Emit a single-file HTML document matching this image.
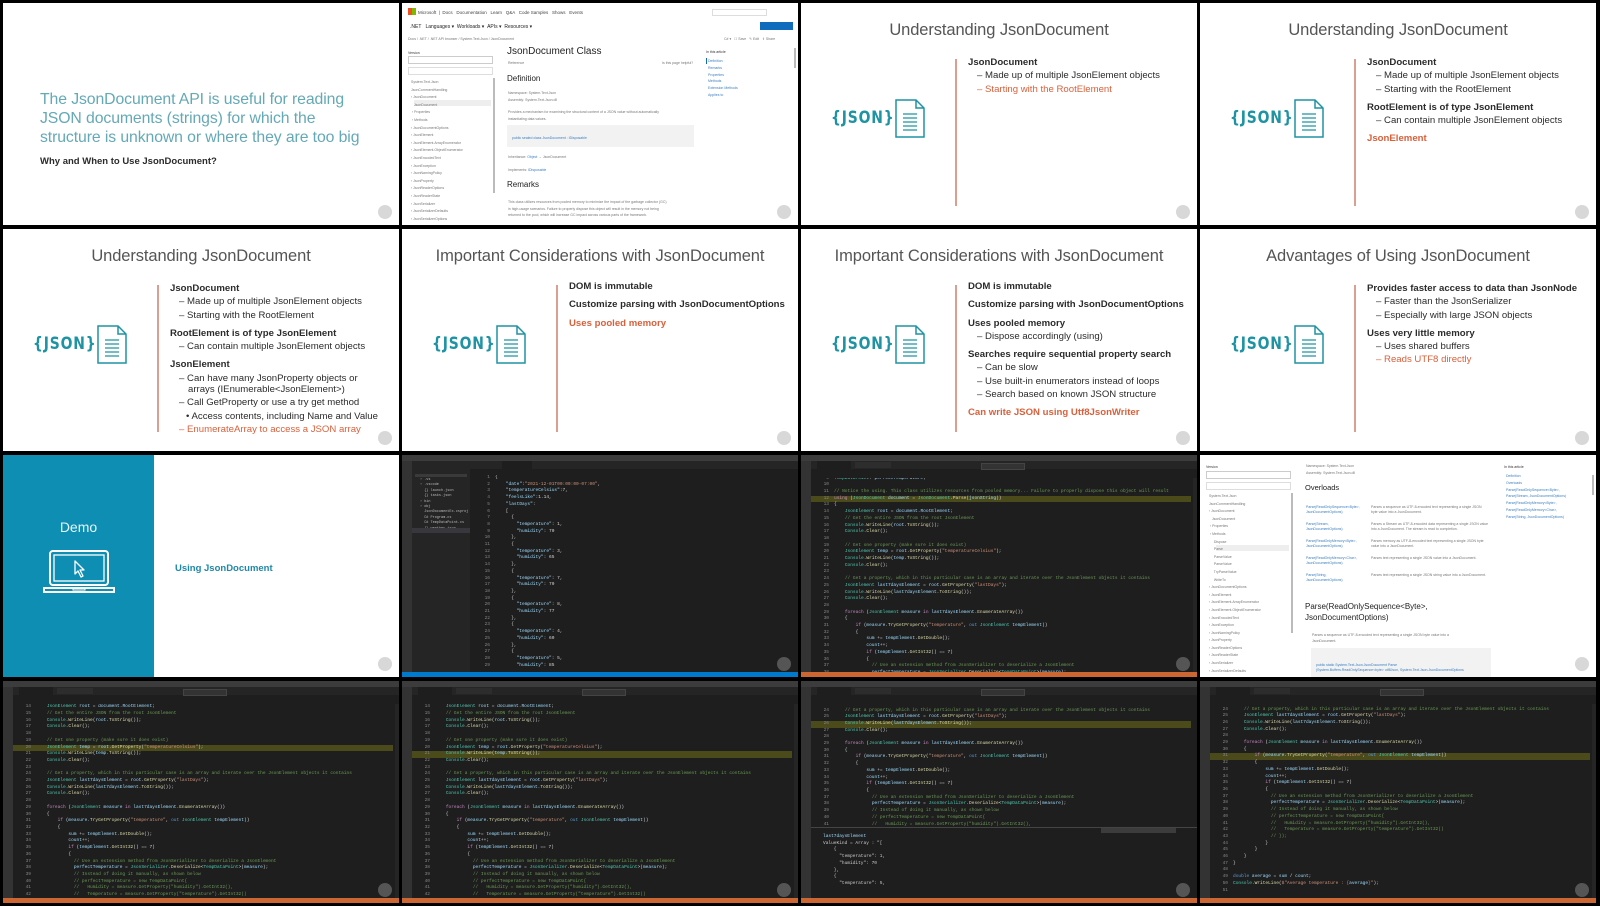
<!DOCTYPE html>
<html style="overflow:hidden"><head><meta charset="utf-8">
<style>
*{margin:0;padding:0;box-sizing:border-box}
body{width:1600px;height:906px;background:#000;position:relative;overflow:hidden;font-family:"Liberation Sans",sans-serif}
.t{position:absolute;width:396px;height:222px;overflow:hidden;background:#fff}
.logo{position:absolute;right:7px;bottom:6px;width:14px;height:14px;border-radius:50%;background:#d8d8d8}
.ttl{position:absolute;top:18px;left:0;width:100%;text-align:center;font-size:16.5px;color:#555;letter-spacing:-.1px}
.div{position:absolute;left:154px;top:56px;width:1.5px;height:147px;background:#d9a090}
.json{position:absolute;left:30px;top:105px;font-family:"DejaVu Sans",sans-serif;font-size:17px;color:#1e93a3;letter-spacing:1px;font-weight:bold;transform:scaleX(.82);transform-origin:left}
.doc{position:absolute;left:94px;top:96px;width:30px;height:39px}
.bl{position:absolute;left:167px;top:53px;font-size:9.6px;color:#2b2b2b;line-height:13.3px}
.bl .h{font-weight:bold}
.bl .s{padding-left:9px}
.bl .s:before{content:"– ";}
.bl .ss{padding-left:16px}
.bl .g{margin-top:5px}
.bl .o{color:#d9603b}
.vs{background:#1e1e1e;font-family:"Liberation Mono",monospace}
.vs .tb{position:absolute;top:0;left:0;right:0;height:6px;background:#3c3c3c}
.vs .ab{position:absolute;top:6px;left:0;width:10px;bottom:5px;background:#333}
.vs .tabs{position:absolute;top:6px;left:10px;right:0;height:8px;background:#252526}
.vs .tab{position:absolute;top:0;height:8px;background:#1e1e1e;width:34px;left:6px}
.vs .tab2{position:absolute;top:1px;height:6px;left:44px;width:36px;background:#2d2d2d}
.vs .dbg{position:absolute;top:8px;left:180px;width:44px;height:7px;background:#333;border:1px solid #444}
.vs .sb{position:absolute;bottom:0;left:0;right:0;height:5px;background:#cc6633}
.vs .ca{position:absolute;top:23px;left:10px;right:4px;bottom:5px;overflow:hidden}
.vs pre{position:absolute;left:0;font-size:4.5px;line-height:6.7px;color:#d4d4d4;font-family:"Liberation Mono",monospace;white-space:pre}
.vs .ln{display:inline-block;width:18px;text-align:right;color:#858585;margin-right:5px}
.vs .hl{background:#4a4a1a}
.c{color:#6a9955}.k{color:#569cd6}.p{color:#c586c0}.y{color:#4ec9b0}.v{color:#9cdcfe}.f{color:#dcdcaa}.s2{color:#ce9178}
.vs .scr{position:absolute;right:0;top:23px;width:4px;bottom:5px;background:#252526}
.dx{font-family:"Liberation Sans",sans-serif;color:#333}
.gt{position:absolute;font-size:3.5px;color:#777;white-space:nowrap}
.lk{color:#3a7fc1}
</style></head><body>

<div class="t" style="left:3px;top:3px">
 <div style="position:absolute;left:37px;top:87px;font-size:15.8px;line-height:19px;color:#64a9b6;letter-spacing:-.1px">The JsonDocument API is useful for reading<br>JSON documents (strings) for which the<br>structure is unknown or where they are too big</div>
 <div style="position:absolute;left:37px;top:153px;font-size:9.5px;font-weight:bold;color:#2b2b2b">Why and When to Use JsonDocument?</div>
 <div class="logo"></div>
</div>

<div class="t dx" style="left:402px;top:3px">
 <div style="position:absolute;left:6px;top:5px;width:8px;height:7px;background:linear-gradient(90deg,#f25022 50%,#7fba00 50%)"></div>
 <div class="gt" style="left:16px;top:7px;font-size:4.5px;color:#444">Microsoft &nbsp;| &nbsp;Docs &nbsp; Documentation &nbsp; Learn &nbsp; Q&amp;A &nbsp; Code Samples &nbsp; Shows &nbsp; Events</div>
 <div style="position:absolute;left:310px;top:6px;width:55px;height:7px;border:1px solid #ddd"></div>
 <div class="gt" style="left:8px;top:21px;font-size:5px;color:#222">.NET &nbsp; Languages ▾ &nbsp;Workloads ▾ &nbsp;APIs ▾ &nbsp;Resources ▾</div>
 <div style="position:absolute;left:358px;top:19px;width:33px;height:8px;background:#0f6cbd"></div>
 <div class="gt" style="left:6px;top:34px">Docs / .NET / .NET API browser / System.Text.Json / JsonDocument</div>
 <div class="gt" style="left:322px;top:34px">C# ▾ &nbsp; ☐ Save &nbsp; ✎ Edit &nbsp; ⇪ Share</div>
 <div class="gt" style="left:6px;top:48px;color:#333">Version</div>
 <div style="position:absolute;left:6px;top:53px;width:85px;height:8px;border:1px solid #ccc"></div>
 <div style="position:absolute;left:6px;top:64px;width:85px;height:8px;border:1px solid #ddd"></div>
 <div style="position:absolute;left:12px;top:97px;width:77px;height:6px;background:#eee"></div>
 <div class="gt" style="left:9px;top:76px;line-height:7.6px;white-space:pre">System.Text.Json
JsonCommentHandling
› JsonDocument
   JsonDocument
 › Properties
 › Methods
› JsonDocumentOptions
› JsonElement
› JsonElement.ArrayEnumerator
› JsonElement.ObjectEnumerator
› JsonEncodedText
› JsonException
› JsonNamingPolicy
› JsonProperty
› JsonReaderOptions
› JsonReaderState
› JsonSerializer
› JsonSerializerDefaults
› JsonSerializerOptions</div>
 <div style="position:absolute;left:91px;top:75px;width:2px;height:115px;background:#bbb"></div>
 <div style="position:absolute;left:105px;top:43px;font-size:10px;color:#222">JsonDocument Class</div>
 <div class="gt" style="left:106px;top:58px">Reference</div>
 <div class="gt" style="left:260px;top:58px">Is this page helpful?</div>
 <div style="position:absolute;left:105px;top:71px;font-size:8px;color:#222">Definition</div>
 <div class="gt" style="left:106px;top:87px;line-height:7px">Namespace: System.Text.Json<br>Assembly: System.Text.Json.dll</div>
 <div class="gt" style="left:106px;top:106px;line-height:7px">Provides a mechanism for examining the structural content of a JSON value without automatically<br>instantiating data values.</div>
 <div style="position:absolute;left:105px;top:122px;width:187px;height:22px;background:#f2f2f2"></div>
 <div class="gt" style="left:110px;top:133px;color:#3a7fc1">public sealed class JsonDocument : IDisposable</div>
 <div class="gt" style="left:106px;top:152px">Inheritance: <span class="lk">Object</span> → JsonDocument</div>
 <div class="gt" style="left:106px;top:165px">Implements: <span class="lk">IDisposable</span></div>
 <div style="position:absolute;left:105px;top:177px;font-size:8px;color:#222">Remarks</div>
 <div class="gt" style="left:106px;top:196px;line-height:6.6px">This class utilizes resources from pooled memory to minimize the impact of the garbage collector (GC)<br>in high-usage scenarios. Failure to properly dispose this object will result in the memory not being<br>returned to the pool, which will increase GC impact across various parts of the framework.</div>
 <div class="gt" style="left:304px;top:47px;color:#333">In this article</div>
 <div class="gt" style="left:306px;top:55px;line-height:6.8px;color:#3a7fc1">Definition<br>Remarks<br>Properties<br>Methods<br>Extension Methods<br>Applies to</div>
 <div style="position:absolute;left:304px;top:55px;width:1px;height:6px;background:#0f6cbd"></div>
 <div style="position:absolute;right:2px;top:45px;width:2px;height:20px;background:#bbb"></div>
 <div class="logo"></div>
</div>

<div class="t" style="left:801px;top:3px">
 <div class="ttl">Understanding JsonDocument</div>
 <div class="div"></div>
 <div class="json">{JSON}</div>
 <svg class="doc" viewBox="0 0 30 39"><path d="M1 1H21L29 9V38H1Z M21 1V9H29" fill="none" stroke="#1e93a3" stroke-width="1.5"/><path d="M8 15H22M8 19H22M8 23H22M8 27H22M8 31H22" stroke="#1e93a3" stroke-width="1.3"/></svg>
 <div class="bl"><div class="h">JsonDocument</div><div class="s">Made up of multiple JsonElement objects</div><div class="s o">Starting with the RootElement</div></div>
 <div class="logo"></div>
</div>

<div class="t" style="left:1200px;top:3px">
 <div class="ttl">Understanding JsonDocument</div>
 <div class="div"></div>
 <div class="json">{JSON}</div>
 <svg class="doc" viewBox="0 0 30 39"><path d="M1 1H21L29 9V38H1Z M21 1V9H29" fill="none" stroke="#1e93a3" stroke-width="1.5"/><path d="M8 15H22M8 19H22M8 23H22M8 27H22M8 31H22" stroke="#1e93a3" stroke-width="1.3"/></svg>
 <div class="bl"><div class="h">JsonDocument</div><div class="s">Made up of multiple JsonElement objects</div><div class="s">Starting with the RootElement</div><div class="h g">RootElement is of type JsonElement</div><div class="s">Can contain multiple JsonElement objects</div><div class="h g o">JsonElement</div></div>
 <div class="logo"></div>
</div>

<div class="t" style="left:3px;top:229px">
 <div class="ttl">Understanding JsonDocument</div>
 <div class="div"></div>
 <div class="json">{JSON}</div>
 <svg class="doc" viewBox="0 0 30 39"><path d="M1 1H21L29 9V38H1Z M21 1V9H29" fill="none" stroke="#1e93a3" stroke-width="1.5"/><path d="M8 15H22M8 19H22M8 23H22M8 27H22M8 31H22" stroke="#1e93a3" stroke-width="1.3"/></svg>
 <div class="bl"><div class="h">JsonDocument</div><div class="s">Made up of multiple JsonElement objects</div><div class="s">Starting with the RootElement</div><div class="h g">RootElement is of type JsonElement</div><div class="s">Can contain multiple JsonElement objects</div><div class="h g">JsonElement</div><div class="s">Can have many JsonProperty objects or</div><div style="padding-left:18px;margin-top:-2px">arrays (IEnumerable&lt;JsonElement&gt;)</div><div class="s">Call GetProperty or use a try get method</div><div class="ss">• Access contents, including Name and Value</div><div class="s o">EnumerateArray to access a JSON array</div></div>
 <div class="logo"></div>
</div>

<div class="t" style="left:402px;top:229px">
 <div class="ttl">Important Considerations with JsonDocument</div>
 <div class="div"></div>
 <div class="json">{JSON}</div>
 <svg class="doc" viewBox="0 0 30 39"><path d="M1 1H21L29 9V38H1Z M21 1V9H29" fill="none" stroke="#1e93a3" stroke-width="1.5"/><path d="M8 15H22M8 19H22M8 23H22M8 27H22M8 31H22" stroke="#1e93a3" stroke-width="1.3"/></svg>
 <div class="bl" style="top:51px"><div class="h">DOM is immutable</div><div class="h" style="margin-top:5px">Customize parsing with JsonDocumentOptions</div><div class="h o" style="margin-top:5px">Uses pooled memory</div></div>
 <div class="logo"></div>
</div>

<div class="t" style="left:801px;top:229px">
 <div class="ttl">Important Considerations with JsonDocument</div>
 <div class="div"></div>
 <div class="json">{JSON}</div>
 <svg class="doc" viewBox="0 0 30 39"><path d="M1 1H21L29 9V38H1Z M21 1V9H29" fill="none" stroke="#1e93a3" stroke-width="1.5"/><path d="M8 15H22M8 19H22M8 23H22M8 27H22M8 31H22" stroke="#1e93a3" stroke-width="1.3"/></svg>
 <div class="bl" style="top:51px"><div class="h">DOM is immutable</div><div class="h" style="margin-top:5px">Customize parsing with JsonDocumentOptions</div><div class="h" style="margin-top:5px">Uses pooled memory</div><div class="s">Dispose accordingly (using)</div><div class="h g">Searches require sequential property search</div><div class="s">Can be slow</div><div class="s">Use built-in enumerators instead of loops</div><div class="s">Search based on known JSON structure</div><div class="h o g">Can write JSON using Utf8JsonWriter</div></div>
 <div class="logo"></div>
</div>

<div class="t" style="left:1200px;top:229px">
 <div class="ttl">Advantages of Using JsonDocument</div>
 <div class="div"></div>
 <div class="json">{JSON}</div>
 <svg class="doc" viewBox="0 0 30 39"><path d="M1 1H21L29 9V38H1Z M21 1V9H29" fill="none" stroke="#1e93a3" stroke-width="1.5"/><path d="M8 15H22M8 19H22M8 23H22M8 27H22M8 31H22" stroke="#1e93a3" stroke-width="1.3"/></svg>
 <div class="bl"><div class="h">Provides faster access to data than JsonNode</div><div class="s">Faster than the JsonSerializer</div><div class="s">Especially with large JSON objects</div><div class="h g">Uses very little memory</div><div class="s">Uses shared buffers</div><div class="s o">Reads UTF8 directly</div></div>
 <div class="logo"></div>
</div>

<div class="t" style="left:3px;top:455px">
 <div style="position:absolute;left:0;top:0;width:151px;height:222px;background:#0e8eb2"></div>
 <div style="position:absolute;left:0;top:64px;width:151px;text-align:center;font-size:14px;color:#e6f6fa">Demo</div>
 <svg style="position:absolute;left:40px;top:94px" width="72" height="46" viewBox="0 0 72 46"><rect x="7" y="2" width="58" height="34" rx="3" fill="none" stroke="#fff" stroke-width="2"/><rect x="11" y="6" width="50" height="26" fill="none" stroke="#fff" stroke-width="1.3"/><path d="M1 39H71V43H1Z" fill="none" stroke="#fff" stroke-width="2"/><path d="M30 39V41H42V39" fill="none" stroke="#fff" stroke-width="1"/><path d="M32 12V25L35 22L38 28L40 27L37 21H41Z" fill="none" stroke="#fff" stroke-width="1.3" stroke-linejoin="round"/></svg>
 <div style="position:absolute;left:172px;top:108px;font-size:9.5px;font-weight:bold;color:#1e88a8">Using JsonDocument</div>
 <div class="logo"></div>
</div>

<div class="t vs" style="left:402px;top:455px">
 <div class="tb"></div>
 <div class="ab"></div>
 <div style="position:absolute;left:10px;top:6px;width:58px;bottom:5px;background:#252526"></div>
 <div style="position:absolute;left:13px;top:19px;width:52px;height:3px;background:#3a3a3a"></div>
 <pre style="top:23px;left:18px;font-size:3.5px;line-height:5.4px;color:#bbb">› .vs
› .vscode
  {} launch.json
  {} tasks.json
› bin
› obj
  JsonDocumentEx.csproj
  C# Program.cs
  C# TempDataPoint.cs
  {} weather.json</pre>
 <div style="position:absolute;left:10px;top:73px;width:58px;height:5px;background:#37373d"></div>
 <div style="position:absolute;left:68px;top:6px;right:0;height:8px;background:#252526"></div>
 <div style="position:absolute;left:100px;top:6px;width:30px;height:8px;background:#1e1e1e"></div>
 <div class="ca" style="left:70px;top:20px">
 <pre style="top:0"><span class="ln">1</span>{
<span class="ln">2</span>    <span class="v">"date"</span>:<span class="s2">"2021-12-01T00:00:00-07:00"</span>,
<span class="ln">3</span>    <span class="v">"temperatureCelsius"</span>:7,
<span class="ln">4</span>    <span class="v">"feelsLike"</span>:1.14,
<span class="ln">5</span>    <span class="v">"lastDays"</span>:
<span class="ln">6</span>    [
<span class="ln">7</span>      {
<span class="ln">8</span>        <span class="v">"temperature"</span>: 1,
<span class="ln">9</span>        <span class="v">"humidity"</span>: 70
<span class="ln">10</span>      },
<span class="ln">11</span>      {
<span class="ln">12</span>        <span class="v">"temperature"</span>: 3,
<span class="ln">13</span>        <span class="v">"humidity"</span>: 65
<span class="ln">14</span>      },
<span class="ln">15</span>      {
<span class="ln">16</span>        <span class="v">"temperature"</span>: 7,
<span class="ln">17</span>        <span class="v">"humidity"</span>: 70
<span class="ln">18</span>      },
<span class="ln">19</span>      {
<span class="ln">20</span>        <span class="v">"temperature"</span>: 8,
<span class="ln">21</span>        <span class="v">"humidity"</span>: 77
<span class="ln">22</span>      },
<span class="ln">23</span>      {
<span class="ln">24</span>        <span class="v">"temperature"</span>: 4,
<span class="ln">25</span>        <span class="v">"humidity"</span>: 60
<span class="ln">26</span>      },
<span class="ln">27</span>      {
<span class="ln">28</span>        <span class="v">"temperature"</span>: 5,
<span class="ln">29</span>        <span class="v">"humidity"</span>: 85</pre></div>
 <div class="sb" style="background:#007acc"></div>
 <div class="logo" style="background:#555"></div>
</div>

<div class="t vs" style="left:801px;top:455px">
 <div class="tb"></div><div class="ab"></div><div class="tabs"><div class="tab"></div><div class="tab2"></div></div><div class="dbg"></div>
 <div class="ca"><pre style="top:-2.4px">CODE_PLACEHOLDER</pre></div>
 <div class="scr"></div>
 <div class="sb"></div>
 <div class="logo" style="background:#555"></div>
</div>

<div class="t dx" style="left:1200px;top:455px">
 <div class="gt" style="left:6px;top:10px;color:#333">Version</div>
 <div style="position:absolute;left:6px;top:16px;width:85px;height:8px;border:1px solid #ccc"></div>
 <div style="position:absolute;left:6px;top:27px;width:85px;height:8px;border:1px solid #ddd"></div>
 <div style="position:absolute;left:16px;top:90px;width:73px;height:6px;background:#eee"></div>
 <div class="gt" style="left:9px;top:38px;line-height:7.6px;white-space:pre">System.Text.Json
JsonCommentHandling
› JsonDocument
   JsonDocument
 › Properties
 › Methods
     Dispose
     Parse
     ParseValue
     ParseValue
     TryParseValue
     WriteTo
› JsonDocumentOptions
› JsonElement
› JsonElement.ArrayEnumerator
› JsonElement.ObjectEnumerator
› JsonEncodedText
› JsonException
› JsonNamingPolicy
› JsonProperty
› JsonReaderOptions
› JsonReaderState
› JsonSerializer
› JsonSerializerDefaults</div>
 <div style="position:absolute;left:91px;top:38px;width:2px;height:140px;background:#bbb"></div>
 <div class="gt" style="left:106px;top:8px;line-height:7px">Namespace: System.Text.Json<br>Assembly: System.Text.Json.dll</div>
 <div style="position:absolute;left:105px;top:28px;font-size:7.5px;color:#222">Overloads</div>
 <div class="gt lk" style="left:106px;top:50px;line-height:5.4px">Parse(ReadOnlySequence&lt;Byte&gt;,<br>JsonDocumentOptions)</div>
 <div class="gt" style="left:171px;top:50px;line-height:5.4px">Parses a sequence as UTF-8-encoded text representing a single JSON<br>byte value into a JsonDocument.</div>
 <div class="gt lk" style="left:106px;top:67px;line-height:5.4px">Parse(Stream,<br>JsonDocumentOptions)</div>
 <div class="gt" style="left:171px;top:67px;line-height:5.4px">Parses a Stream as UTF-8-encoded data representing a single JSON value<br>into a JsonDocument. The stream is read to completion.</div>
 <div class="gt lk" style="left:106px;top:84px;line-height:5.4px">Parse(ReadOnlyMemory&lt;Byte&gt;,<br>JsonDocumentOptions)</div>
 <div class="gt" style="left:171px;top:84px;line-height:5.4px">Parses memory as UTF-8-encoded text representing a single JSON byte<br>value into a JsonDocument.</div>
 <div class="gt lk" style="left:106px;top:101px;line-height:5.4px">Parse(ReadOnlyMemory&lt;Char&gt;,<br>JsonDocumentOptions)</div>
 <div class="gt" style="left:171px;top:101px;line-height:5.4px">Parses text representing a single JSON value into a JsonDocument.</div>
 <div class="gt lk" style="left:106px;top:118px;line-height:5.4px">Parse(String,<br>JsonDocumentOptions)</div>
 <div class="gt" style="left:171px;top:118px;line-height:5.4px">Parses text representing a single JSON string value into a JsonDocument.</div>
 <div style="position:absolute;left:105px;top:146px;font-size:8px;line-height:11px;color:#222">Parse(ReadOnlySequence&lt;Byte&gt;,<br>JsonDocumentOptions)</div>
 <div class="gt" style="left:112px;top:177px;line-height:6px">Parses a sequence as UTF-8-encoded text representing a single JSON byte value into a<br>JsonDocument.</div>
 <div style="position:absolute;left:111px;top:193px;width:180px;height:30px;background:#f2f2f2"></div>
 <div class="gt" style="left:116px;top:208px;line-height:4.5px;color:#3a7fc1">public static System.Text.Json.JsonDocument Parse<br>(System.Buffers.ReadOnlySequence&lt;byte&gt; utf8Json, System.Text.Json.JsonDocumentOptions</div>
 <div class="gt" style="left:304px;top:10px;color:#333">In this article</div>
 <div class="gt" style="left:306px;top:18px;line-height:6.8px;color:#3a7fc1">Definition<br>Overloads<br>Parse(ReadOnlySequence&lt;Byte&gt;,<br>Parse(Stream, JsonDocumentOptions)<br>Parse(ReadOnlyMemory&lt;Byte&gt;,<br>Parse(ReadOnlyMemory&lt;Char&gt;,<br>Parse(String, JsonDocumentOptions)</div>
 <div style="position:absolute;right:2px;top:20px;width:2px;height:20px;background:#bbb"></div>
 <div class="logo"></div>
</div>

<div class="t vs" style="left:3px;top:681px">
 <div class="tb"></div><div class="ab"></div><div class="tabs"><div class="tab"></div><div class="tab2"></div></div><div class="dbg"></div>
 <div class="ca"><pre style="top:-33.2px">CODE_PLACEHOLDER</pre></div>
 <div class="scr"></div><div class="sb"></div>
 <div class="logo" style="background:#555"></div>
</div>
<div class="t vs" style="left:402px;top:681px">
 <div class="tb"></div><div class="ab"></div><div class="tabs"><div class="tab"></div><div class="tab2"></div></div><div class="dbg"></div>
 <div class="ca"><pre style="top:-33.2px">CODE_PLACEHOLDER</pre></div>
 <div class="scr"></div><div class="sb"></div>
 <div class="logo" style="background:#555"></div>
</div>
<div class="t vs" style="left:801px;top:681px">
 <div class="tb"></div><div class="ab"></div><div class="tabs"><div class="tab"></div><div class="tab2"></div></div><div class="dbg"></div>
 <div class="ca" style="bottom:76px"><pre style="top:-97px">CODE_PLACEHOLDER</pre></div>
 <div style="position:absolute;left:10px;right:0;top:146px;height:6px;border-top:1px solid #444;background:#1e1e1e"></div>
 <div style="position:absolute;left:300px;top:147px;width:75px;height:5px;background:#3c3c3c"></div>
 <pre style="top:153px;left:22px;color:#ccc;font-size:4.5px;line-height:6.7px"><span class="v">last7daysElement</span>
ValueKind = Array : "[
    {
      "temperature": 1,
      "humidity": 70
    },
    {
      "temperature": 5,</pre>
 <div class="sb"></div>
 <div class="logo" style="background:#555"></div>
</div>
<div class="t vs" style="left:1200px;top:681px">
 <div class="tb"></div><div class="ab"></div><div class="tabs"><div class="tab"></div><div class="tab2"></div></div><div class="dbg"></div>
 <div class="ca"><pre style="top:-98px">CODE_PLACEHOLDER</pre></div>
 <div class="scr"></div><div class="sb"></div>
 <div class="logo" style="background:#555"></div>
</div>

<script>
var L=[
[9,'<span class="y">TempDataPoint</span>? <span class="v">perfectTemperature</span>;'],
[10,''],
[11,'<span class="c">// Notice the using. This class utilizes resources from pooled memory... Failure to properly dispose this object will result</span>'],
[12,'<span class="p">using</span> (<span class="y">JsonDocument</span> <span class="v">document</span> = <span class="y">JsonDocument</span>.<span class="f">Parse</span>(<span class="v">jsonString</span>))'],
[13,'{'],
[14,'    <span class="y">JsonElement</span> <span class="v">root</span> = <span class="v">document</span>.<span class="v">RootElement</span>;'],
[15,'    <span class="c">// Get the entire JSON from the root JsonElement</span>'],
[16,'    <span class="y">Console</span>.<span class="f">WriteLine</span>(<span class="v">root</span>.<span class="f">ToString</span>());'],
[17,'    <span class="y">Console</span>.<span class="f">Clear</span>();'],
[18,''],
[19,'    <span class="c">// Get one property (make sure it does exist)</span>'],
[20,'    <span class="y">JsonElement</span> <span class="v">temp</span> = <span class="v">root</span>.<span class="f">GetProperty</span>(<span class="s2">"temperatureCelsius"</span>);'],
[21,'    <span class="y">Console</span>.<span class="f">WriteLine</span>(<span class="v">temp</span>.<span class="f">ToString</span>());'],
[22,'    <span class="y">Console</span>.<span class="f">Clear</span>();'],
[23,''],
[24,'    <span class="c">// Get a property, which in this particular case is an array and iterate over the JsonElement objects it contains</span>'],
[25,'    <span class="y">JsonElement</span> <span class="v">last7daysElement</span> = <span class="v">root</span>.<span class="f">GetProperty</span>(<span class="s2">"lastDays"</span>);'],
[26,'    <span class="y">Console</span>.<span class="f">WriteLine</span>(<span class="v">last7daysElement</span>.<span class="f">ToString</span>());'],
[27,'    <span class="y">Console</span>.<span class="f">Clear</span>();'],
[28,''],
[29,'    <span class="p">foreach</span> (<span class="y">JsonElement</span> <span class="v">measure</span> <span class="p">in</span> <span class="v">last7daysElement</span>.<span class="f">EnumerateArray</span>())'],
[30,'    {'],
[31,'        <span class="p">if</span> (<span class="v">measure</span>.<span class="f">TryGetProperty</span>(<span class="s2">"temperature"</span>, <span class="k">out</span> <span class="y">JsonElement</span> <span class="v">tempElement</span>))'],
[32,'        {'],
[33,'            <span class="v">sum</span> += <span class="v">tempElement</span>.<span class="f">GetDouble</span>();'],
[34,'            <span class="v">count</span>++;'],
[35,'            <span class="p">if</span> (<span class="v">tempElement</span>.<span class="f">GetInt32</span>() == 7)'],
[36,'            {'],
[37,'              <span class="c">// Use an extension method from JsonSerializer to deserialize a JsonElement</span>'],
[38,'              <span class="v">perfectTemperature</span> = <span class="y">JsonSerializer</span>.<span class="f">Deserialize</span>&lt;<span class="y">TempDataPoint</span>&gt;(<span class="v">measure</span>);'],
[39,'              <span class="c">// Instead of doing it manually, as shown below</span>'],
[40,'              <span class="c">// perfectTemperature = new TempDataPoint{</span>'],
[41,'              <span class="c">//   Humidity = measure.GetProperty("humidity").GetInt32(),</span>'],
[42,'              <span class="c">//   Temperature = measure.GetProperty("temperature").GetInt32()</span>'],
[43,'              <span class="c">// });</span>'],
[44,'            }'],
[45,'        }'],
[46,'    }'],
[47,'}'],
[48,''],
[49,'<span class="k">double</span> <span class="v">average</span> = <span class="v">sum</span> / <span class="v">count</span>;'],
[50,'<span class="y">Console</span>.<span class="f">WriteLine</span>(<span class="s2">$"Average temperature : {</span><span class="v">average</span><span class="s2">}"</span>);'],
[51,'']];
var HL=[12,20,21,26,31];
var pres=document.querySelectorAll('.ca pre');
var k=0;
pres.forEach(function(p){
 if(p.textContent!=='CODE_PLACEHOLDER')return;
 var h=HL[k++];
 p.innerHTML=L.map(function(r){var t='<span class="ln">'+r[0]+'</span>'+r[1];
  if(r[0]===h)t='<span class="hl" style="display:inline-block;width:380px">'+t+'</span>';return t;}).join('\n');
});
</script>
</body></html>
